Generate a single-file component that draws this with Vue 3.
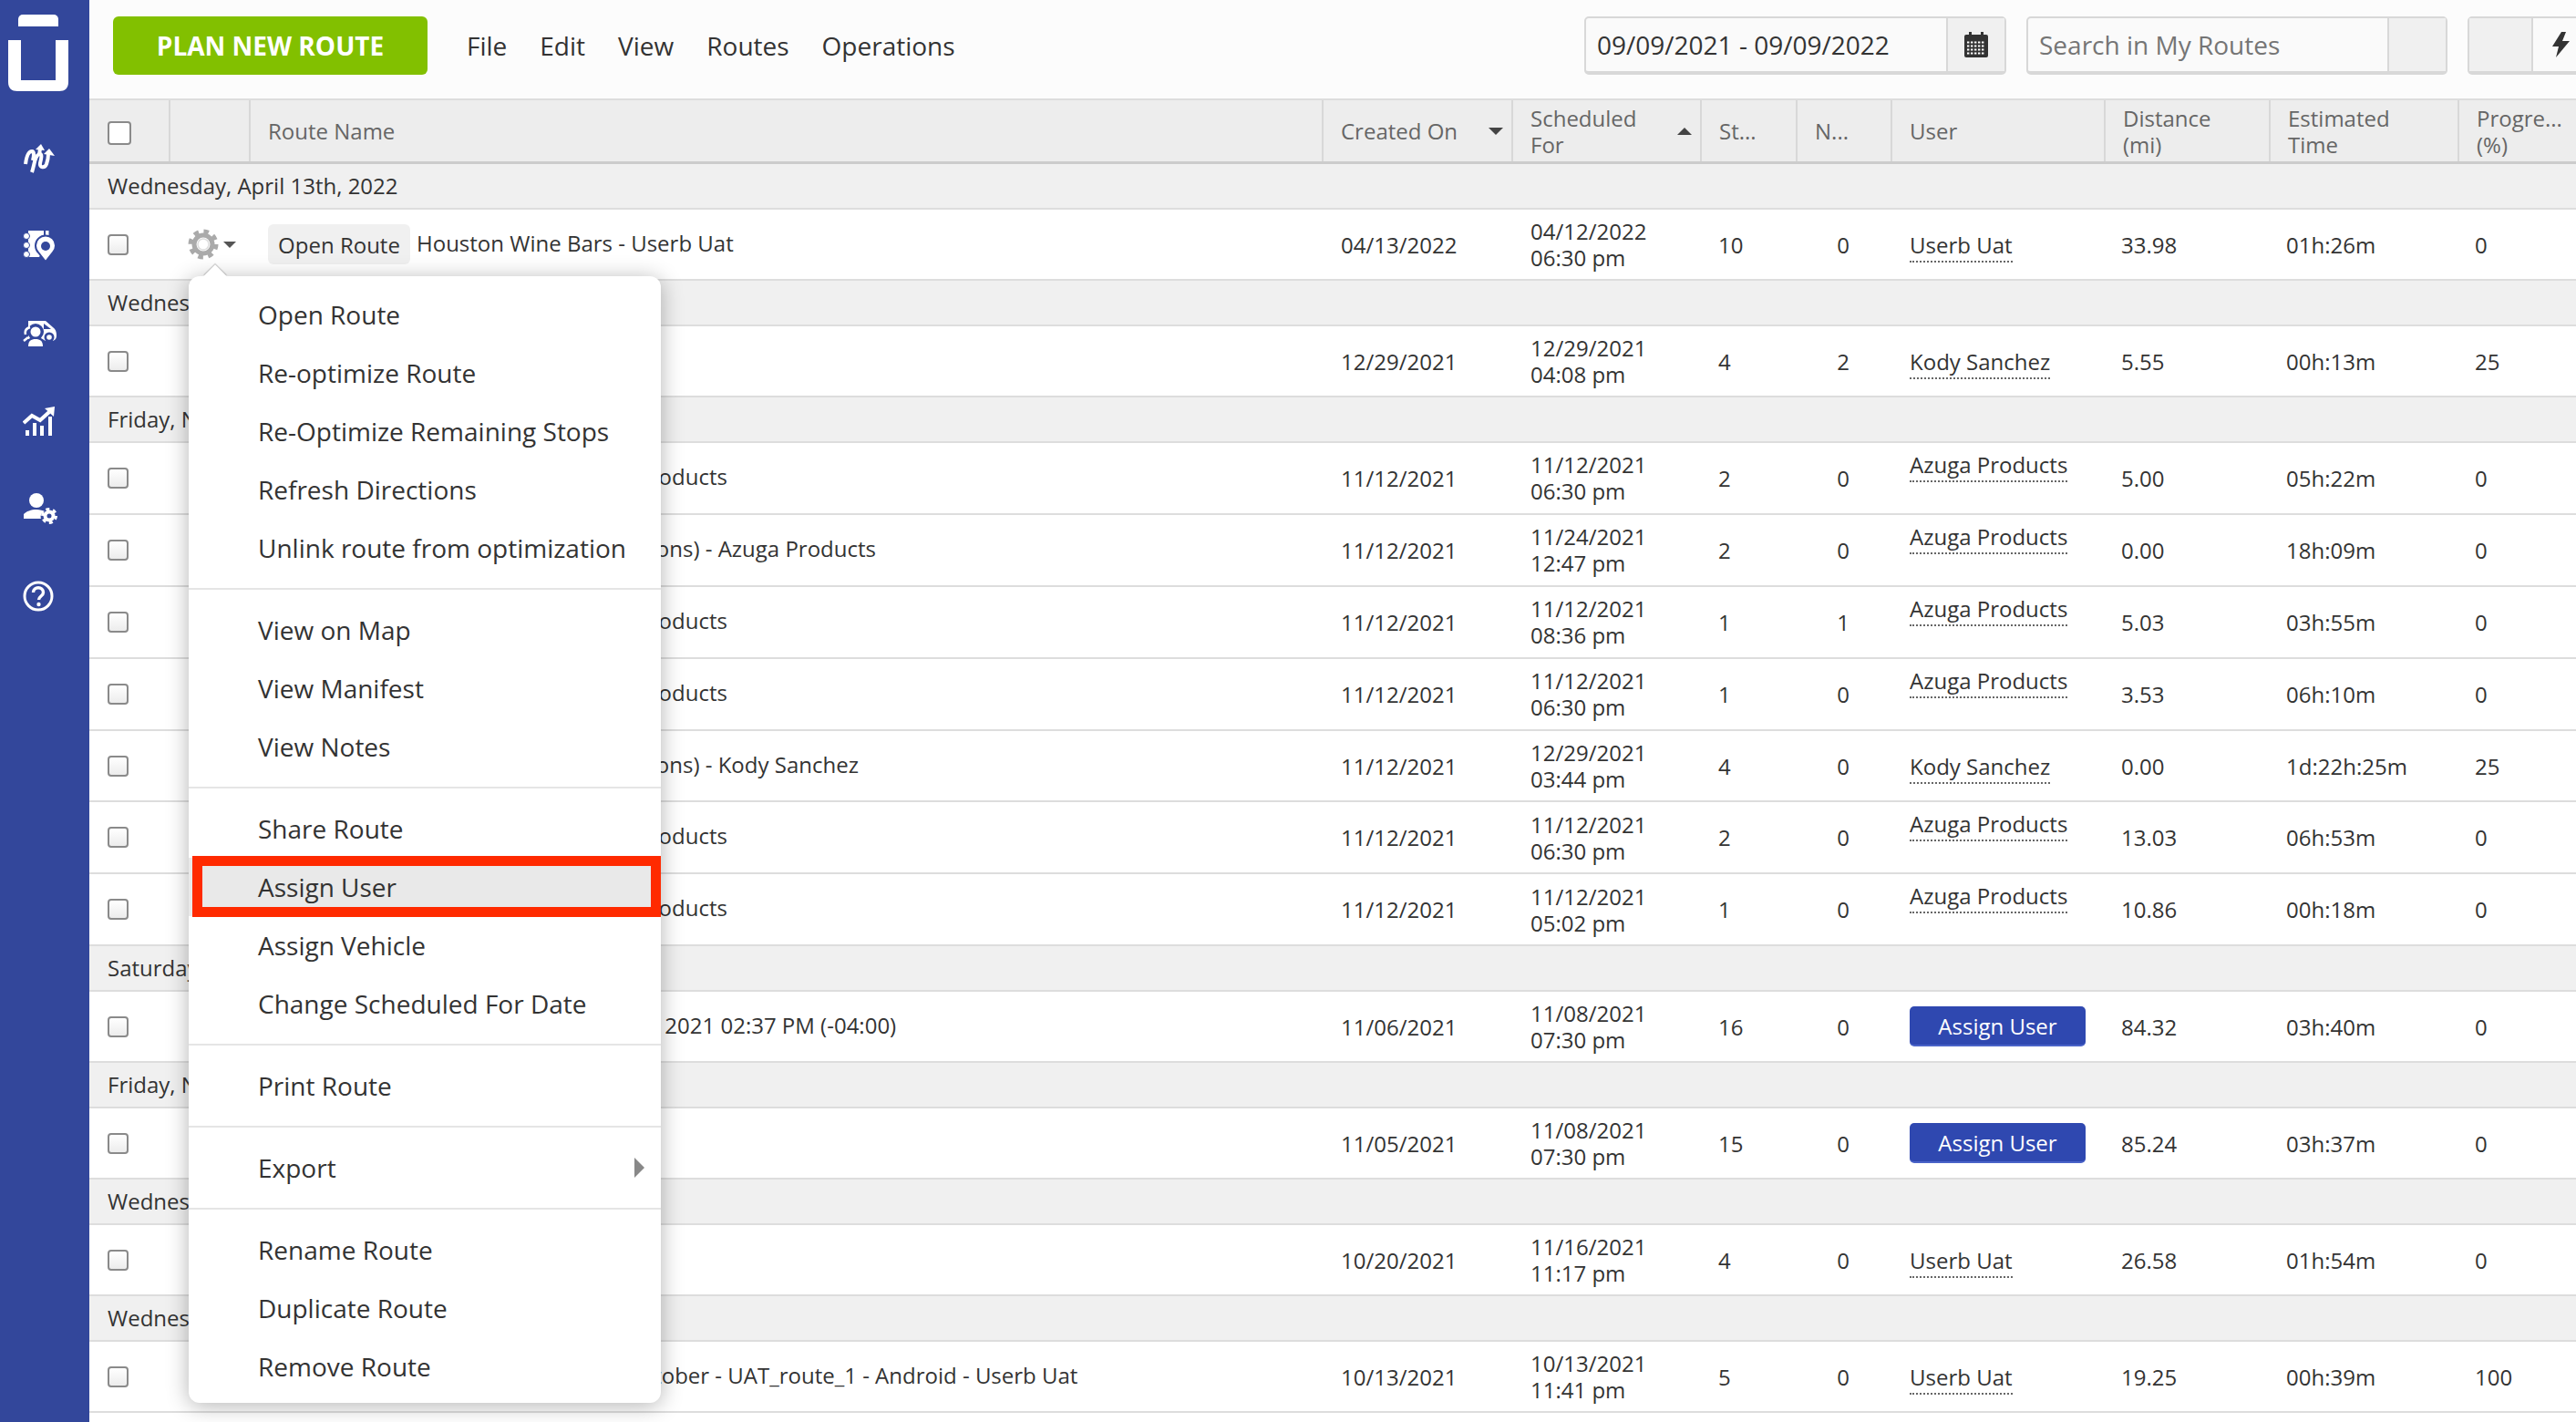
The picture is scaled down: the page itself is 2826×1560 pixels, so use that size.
<template>
  <div class="page">
    <aside class="sidebar">
      <svg class="logo" viewBox="0 0 84 108" width="84" height="108">
        <path d="M20 21a5 5 0 0 1 5-5h34a5 5 0 0 1 5 5v8H20z" fill="#fff" />
        <path d="M9 44h14v44h38V44h14v46c0 7-4 10-10 10H19c-6 0-10-3-10-10z" fill="#fff" />
      </svg>
      <div class="nav-icons">
        <div class="nav-icon">
          <svg viewBox="0 0 36 34" width="36" height="34" fill="none" stroke="#fff" stroke-width="4">
            <path d="M3 23C4 15 6 9 10 9c3 0 2 6 1 10" />
            <path d="M10 32c3-9 3-18 8-20 4-1 2 6 1 10-1 5 5 6 7 1 1-3 2-6 2-11" />
            <path d="M18 13l1-7" />
            <path d="M14 7l6-6 4 7z" fill="#fff" stroke="none" />
            <path d="M23 12l6-6 6 8z" fill="#fff" stroke="none" />
          </svg>
        </div>
        <div class="nav-icon">
          <svg viewBox="0 0 36 36" width="36" height="36">
            <path d="M6 1h17v20l-5 9H6z" fill="#fff" />
            <rect x="25" y="1" width="3.5" height="12" fill="#fff" />
            <circle cx="4" cy="7" r="3.5" fill="#fff" stroke="#33479b" stroke-width="1" />
            <circle cx="4" cy="17" r="3.5" fill="#fff" stroke="#33479b" stroke-width="1" />
            <circle cx="4" cy="27" r="3.5" fill="#fff" stroke="#33479b" stroke-width="1" />
            <path d="M25 35l-8-10a11 11 0 1 1 16 0z" fill="#fff" stroke="#33479b" stroke-width="2" />
            <circle cx="25" cy="18" r="5" fill="#33479b" />
          </svg>
        </div>
        <div class="nav-icon">
          <svg viewBox="0 0 38 30" width="38" height="30">
            <path d="M6 1h19l8 7c3 2 4 5 4 9 0 3-1 5-4 6H6z" fill="#fff" />
            <path d="M23 4l8 6h-8z" fill="#33479b" />
            <circle cx="29" cy="19" r="5.5" fill="#33479b" />
            <circle cx="29" cy="19" r="2.8" fill="#fff" />
            <circle cx="14" cy="13" r="9" fill="#33479b" />
            <path d="M3 30v-7l5-3h12l5 3v7z" fill="#33479b" />
            <circle cx="14" cy="13" r="5.5" fill="#fff" />
            <path d="M6 29c0-6 3-8 8-8s8 2 8 8z" fill="#fff" />
            <path d="M8 8c-4 1-6 4-5 8M1 23l5-4" fill="none" stroke="#fff" stroke-width="2.5" />
          </svg>
        </div>
        <div class="nav-icon">
          <svg viewBox="0 0 36 32" width="36" height="32" fill="#fff">
            <rect x="3" y="26" width="4" height="6" />
            <rect x="11" y="18" width="4" height="14" />
            <rect x="19" y="21" width="4" height="11" />
            <rect x="28" y="11" width="4" height="21" />
            <path d="M1 18l9-8 9 5L29 6" fill="none" stroke="#fff" stroke-width="4" />
            <path d="M24 2l11-2-1 11z" />
          </svg>
        </div>
        <div class="nav-icon">
          <svg viewBox="0 0 38 34" width="38" height="34" fill="#fff">
            <circle cx="15" cy="8" r="8" />
            <path d="M1 28v-5c3-3 8-5 14-5 4 0 7 1 9 2-4 2-5 5-4 8z" />
            <circle cx="29" cy="25" r="4.5" fill="none" stroke="#fff" stroke-width="4" />
            <circle cx="29" cy="25" r="7.5" fill="none" stroke="#fff" stroke-width="3" stroke-dasharray="4 3.85" />
          </svg>
        </div>
        <div class="nav-icon">
          <svg viewBox="0 0 34 34" width="34" height="34">
            <circle cx="17" cy="17" r="15" fill="none" stroke="#fff" stroke-width="3" />
            <path d="M11.5 13c0-7 11-7 11 0 0 4-5 4-5 8" fill="none" stroke="#fff" stroke-width="3.4" />
            <circle cx="17.5" cy="26" r="2.2" fill="#fff" />
          </svg>
        </div>
      </div>
    </aside>

    <main class="content">
      <header class="topbar">
        <button class="plan-btn">PLAN NEW ROUTE</button>
        <nav class="top-menu">
          <span v-for="m in topMenu" :key="m">{{ m }}</span>
        </nav>
        <div class="top-tools">
          <div class="input-group date-group">
            <div class="input-text">09/09/2021 - 09/09/2022</div>
            <div class="addon">
              <svg viewBox="0 0 26 28" width="26" height="28">
                <rect x="0" y="3" width="26" height="25" rx="2" fill="#333" />
                <rect x="5" y="0" width="3" height="5" fill="#333" />
                <rect x="18" y="0" width="3" height="5" fill="#333" />
                <g stroke="#fff" stroke-width="2" stroke-dasharray="2.4 1.6">
                  <path d="M3 11.5h20M3 15.5h20M3 19.5h20M3 23.5h20" />
                </g>
              </svg>
            </div>
          </div>
          <div class="input-group search-group">
            <div class="input-text placeholder">Search in My Routes</div>
            <div class="addon"></div>
          </div>
          <div class="input-group extra-group">
            <div class="addon extra-a"></div>
            <div class="addon extra-b">
              <svg viewBox="0 0 19 28" width="19" height="28">
                <path d="M10 0L0 16h7L4 28l15-18h-8l4-10z" fill="#333" />
              </svg>
            </div>
          </div>
        </div>
      </header>

      <div class="grid head">
        <div class="h-cell"><input type="checkbox" class="check head-check" /></div>
        <div class="h-cell"></div>
        <div class="h-cell pad">Route Name</div>
        <div class="h-cell pad sort">Created On<i class="caret-down"></i></div>
        <div class="h-cell pad sort"><span>Scheduled<br />For</span><i class="caret-up"></i></div>
        <div class="h-cell pad">St...</div>
        <div class="h-cell pad">N...</div>
        <div class="h-cell pad">User</div>
        <div class="h-cell pad"><span>Distance<br />(mi)</span></div>
        <div class="h-cell pad"><span>Estimated<br />Time</span></div>
        <div class="h-cell pad"><span>Progre...<br />(%)</span></div>
      </div>

      <template v-for="g in groups" :key="g.label">
        <div class="group-row">{{ g.label }}</div>
        <div v-for="(r, i) in g.rows" :key="i" class="grid row" :class="{ tall: g.tall }">
          <div class="cell"><input type="checkbox" class="check" /></div>
          <div class="cell gear-cell">
            <template v-if="r.active">
              <svg viewBox="0 0 34 34" width="34" height="34" fill="none">
                <circle cx="17" cy="17" r="14" stroke="#aaa" stroke-width="5" stroke-dasharray="5.5 5.5" />
                <circle cx="17" cy="17" r="10" stroke="#aaa" stroke-width="5" />
                <circle cx="17" cy="17" r="6" stroke="#ddd" stroke-width="1.5" />
              </svg>
              <i class="gear-caret"></i>
            </template>
          </div>
          <div class="cell pad name-cell">
            <button v-if="r.active" class="open-btn">Open Route</button>
            <span class="name">{{ r.name }}</span>
          </div>
          <div class="cell pad">{{ r.created }}</div>
          <div class="cell pad"><span>{{ r.date }}<br />{{ r.time }}</span></div>
          <div class="cell pad stops">{{ r.stops }}</div>
          <div class="cell center">{{ r.n }}</div>
          <div class="cell pad">
            <button v-if="!r.user" class="assign-btn">Assign User</button>
            <a v-else class="user" :class="{ raised: r.user === 'Azuga Products' }">{{ r.user }}</a>
          </div>
          <div class="cell pad tight">{{ r.dist }}</div>
          <div class="cell pad tight">{{ r.est }}</div>
          <div class="cell pad tight">{{ r.prog }}</div>
        </div>
      </template>
    </main>

    <div class="menu">
      <i class="menu-arrow"></i>
      <template v-for="(section, s) in menu" :key="s">
        <div v-if="s > 0" class="menu-sep"></div>
        <div
          v-for="item in section"
          :key="item"
          class="menu-item"
          :class="{ hot: item === 'Assign User' }"
        >
          {{ item }}
          <i v-if="item === 'Export'" class="sub-arrow"></i>
        </div>
      </template>
    </div>
  </div>
</template>

<script setup>
const topMenu = ['File', 'Edit', 'View', 'Routes', 'Operations']

const menu = [
  ['Open Route', 'Re-optimize Route', 'Re-Optimize Remaining Stops', 'Refresh Directions', 'Unlink route from optimization'],
  ['View on Map', 'View Manifest', 'View Notes'],
  ['Share Route', 'Assign User', 'Assign Vehicle', 'Change Scheduled For Date'],
  ['Print Route'],
  ['Export'],
  ['Rename Route', 'Duplicate Route', 'Remove Route'],
]

const az = 'Azuga Products'
const row = (name, created, date, time, stops, n, user, dist, est, prog, active) => ({
  name, created, date, time, stops, n, user, dist, est, prog, active,
})

const groups = [
  {
    label: 'Wednesday, April 13th, 2022',
    rows: [row('Houston Wine Bars - Userb Uat', '04/13/2022', '04/12/2022', '06:30 pm', 10, 0, 'Userb Uat', '33.98', '01h:26m', 0, true)],
  },
  {
    label: 'Wednesday, December 29th, 2021',
    rows: [row('Route 12/29', '12/29/2021', '12/29/2021', '04:08 pm', 4, 2, 'Kody Sanchez', '5.55', '00h:13m', 25)],
  },
  {
    label: 'Friday, November 12th, 2021',
    tall: true,
    rows: [
      row('Route Imported 11/12/2021 - Azuga Products', '11/12/2021', '11/12/2021', '06:30 pm', 2, 0, az, '5.00', '05h:22m', 0),
      row('Route 11/12/2021 (Multiple Optimizations) - Azuga Products', '11/12/2021', '11/24/2021', '12:47 pm', 2, 0, az, '0.00', '18h:09m', 0),
      row('Route Imported 11/12/2021 - Azuga Products', '11/12/2021', '11/12/2021', '08:36 pm', 1, 1, az, '5.03', '03h:55m', 0),
      row('Route Imported 11/12/2021 - Azuga Products', '11/12/2021', '11/12/2021', '06:30 pm', 1, 0, az, '3.53', '06h:10m', 0),
      row('Route 11/12/2021 (Multiple Optimizations) - Kody Sanchez', '11/12/2021', '12/29/2021', '03:44 pm', 4, 0, 'Kody Sanchez', '0.00', '1d:22h:25m', 25),
      row('Route Imported 11/12/2021 - Azuga Products', '11/12/2021', '11/12/2021', '06:30 pm', 2, 0, az, '13.03', '06h:53m', 0),
      row('Route Imported 11/12/2021 - Azuga Products', '11/12/2021', '11/12/2021', '05:02 pm', 1, 0, az, '10.86', '00h:18m', 0),
    ],
  },
  {
    label: 'Saturday, November 6th, 2021',
    rows: [row('Optimization Route, Saturday Nov 6th, 2021 02:37 PM (-04:00)', '11/06/2021', '11/08/2021', '07:30 pm', 16, 0, '', '84.32', '03h:40m', 0)],
  },
  {
    label: 'Friday, November 5th, 2021',
    rows: [row('Route 11/05', '11/05/2021', '11/08/2021', '07:30 pm', 15, 0, '', '85.24', '03h:37m', 0)],
  },
  {
    label: 'Wednesday, October 20th, 2021',
    rows: [row('Route 10/20', '10/20/2021', '11/16/2021', '11:17 pm', 4, 0, 'Userb Uat', '26.58', '01h:54m', 0)],
  },
  {
    label: 'Wednesday, October 13th, 2021',
    rows: [row('Route Optimization Wednesday 13 October - UAT_route_1 - Android - Userb Uat', '10/13/2021', '10/13/2021', '11:41 pm', 5, 0, 'Userb Uat', '19.25', '00h:39m', 100)],
  },
]
</script>

<style>
html,
body {
  margin: 0;
  overflow: hidden;
  background: #fff;
}
</style>

<style scoped>
.page {
  position: relative;
  display: flex;
  width: 2826px;
  height: 1560px;
  overflow: hidden;
  font-family: "Open Sans", "Liberation Sans", sans-serif;
  font-size: 24px;
  color: #333;
}

.sidebar {
  flex: 0 0 98px;
  background: #33479b;
}
.logo {
  display: block;
}
.nav-icons {
  display: flex;
  flex-direction: column;
  margin-top: 18px;
}
.nav-icon {
  height: 96px;
  display: flex;
  align-items: center;
  padding-left: 25px;
}

.content {
  flex: 0 0 2728px;
  min-width: 0;
}

.topbar {
  height: 108px;
  box-sizing: border-box;
  background: #fcfcfc;
  display: flex;
  align-items: flex-start;
  padding: 18px 0 0 26px;
}
.plan-btn {
  width: 345px;
  height: 64px;
  border: none;
  border-radius: 6px;
  background: #82c000;
  color: #fff;
  font: 700 28px "Open Sans", sans-serif;
  padding: 0;
}
.top-menu {
  display: flex;
  gap: 36px;
  margin-left: 43px;
  font-size: 28px;
  line-height: 64px;
}
.top-tools {
  display: flex;
  margin-left: auto;
  gap: 22px;
  margin-right: -50px;
}
.input-group {
  display: flex;
  height: 64px;
  box-sizing: border-box;
  border: 2px solid #d8d8d8;
  border-bottom-width: 4px;
  border-radius: 5px;
  background: #fafafa;
  font-size: 28px;
}
.input-text {
  flex: 1;
  padding-left: 12px;
  line-height: 58px;
}
.placeholder {
  color: #757575;
}
.addon {
  width: 62px;
  background: #f0f0f0;
  border-left: 2px solid #d8d8d8;
  display: flex;
  align-items: center;
  justify-content: center;
}
.date-group {
  width: 463px;
}
.search-group {
  width: 462px;
}
.extra-group {
  width: 169px;
}
.extra-a {
  width: 68px;
  border-left: none;
}
.extra-b {
  flex: 1;
  justify-content: flex-start;
  padding-left: 21px;
  background: #fafafa;
}

.grid {
  display: grid;
  grid-template-columns: 87px 88px 1177px 208px 207px 105px 104px 234px 181px 207px 130px;
}
.head {
  height: 72px;
  box-sizing: border-box;
  background: #ededed;
  border-top: 2px solid #ddd;
  border-bottom: 3px solid #ccc;
  color: #666;
  line-height: 29px;
}
.h-cell {
  display: flex;
  align-items: center;
  border-left: 2px solid #d8d8d8;
  min-width: 0;
}
.h-cell:first-child {
  border-left: none;
}
.h-cell.pad {
  padding-left: 19px;
}
.sort {
  position: relative;
}
.caret-down,
.caret-up {
  position: absolute;
  right: 9px;
  width: 0;
  height: 0;
  border-left: 8px solid transparent;
  border-right: 8px solid transparent;
}
.caret-down {
  border-top: 8px solid #444;
}
.caret-up {
  border-bottom: 8px solid #444;
}

.group-row {
  height: 50px;
  box-sizing: border-box;
  background: #f0f0f0;
  border-bottom: 2px solid #ddd;
  padding-left: 20px;
  line-height: 48px;
}
.row {
  height: 78px;
  box-sizing: border-box;
  background: #fff;
  border-bottom: 2px solid #ddd;
  line-height: 29px;
}
.row.tall {
  height: 78.9px;
}
.cell {
  display: flex;
  align-items: center;
  min-width: 0;
  white-space: nowrap;
}
.cell.pad {
  padding-left: 21px;
}
.cell.stops {
  padding-left: 20px;
}
.cell.tight {
  padding-left: 19px;
}
.cell.center {
  justify-content: center;
}

.check {
  appearance: none;
  margin: 0 0 0 20px;
  width: 23px;
  height: 23px;
  border: 2px solid #8a8a8a;
  border-radius: 4px;
  background: linear-gradient(#fff, #ececec);
}
.head-check {
  width: 26px;
  height: 26px;
  margin-top: 5px;
  background: #fff;
}

.gear-cell {
  padding-left: 21px;
}
.gear-caret {
  margin-left: 5px;
  width: 0;
  height: 0;
  border-left: 7px solid transparent;
  border-right: 7px solid transparent;
  border-top: 7px solid #555;
}

.open-btn {
  height: 44px;
  width: 156px;
  margin-right: 7px;
  padding: 0;
  border: none;
  border-radius: 6px;
  background: #f0f0f0;
  color: #333;
  font: 24px "Open Sans", sans-serif;
}
.name {
  margin-bottom: 4px;
}

.user {
  border-bottom: 2px dotted #666;
  line-height: 30px;
  padding-bottom: 2px;
  margin-top: 5px;
}
.user.raised {
  margin-top: 0;
  margin-bottom: 25px;
}
.assign-btn {
  width: 193px;
  height: 44px;
  padding: 0;
  border: none;
  border-bottom: 2px solid #4a63c8;
  border-radius: 5px;
  background: #2f48b0;
  color: #fff;
  font: 24px "Open Sans", sans-serif;
}

.menu {
  position: absolute;
  left: 207px;
  top: 303px;
  width: 518px;
  box-sizing: border-box;
  padding: 10px 0 8px;
  background: #fff;
  border-radius: 12px;
  box-shadow: 0 3px 24px rgba(0, 0, 0, 0.3);
  font-size: 28px;
}
.menu-arrow {
  position: absolute;
  left: 20px;
  top: -9px;
  width: 18px;
  height: 18px;
  background: #fff;
  transform: rotate(45deg);
  box-shadow: -1px -1px 1px rgba(0, 0, 0, 0.2);
}
.menu-item {
  position: relative;
  height: 64px;
  line-height: 64px;
  padding-left: 76px;
  white-space: nowrap;
}
.menu-sep {
  height: 2px;
  margin: 12px 0;
  background: #e5e5e5;
}
.hot {
  background: #e9e9e9;
}
.hot::after {
  content: "";
  position: absolute;
  left: 4px;
  right: 0;
  top: -2px;
  bottom: -1px;
  border: 11px solid #ff2a00;
  pointer-events: none;
}
.sub-arrow {
  position: absolute;
  right: 18px;
  top: 21px;
  width: 0;
  height: 0;
  border-top: 11px solid transparent;
  border-bottom: 11px solid transparent;
  border-left: 11px solid #888;
}
</style>
